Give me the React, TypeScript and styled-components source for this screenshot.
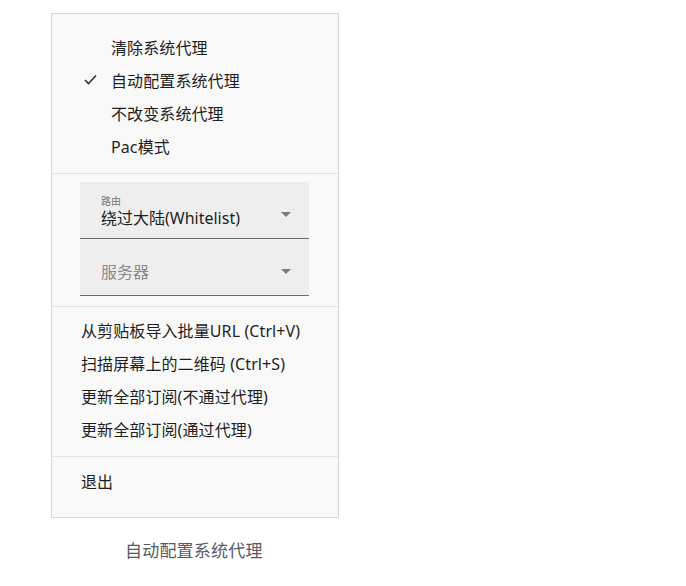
import React from "react";
import styled, { createGlobalStyle } from "styled-components";

const Global = createGlobalStyle`
  html, body { margin: 0; padding: 0; background: #ffffff; }
  body { font-family: "Noto Sans", "Noto Sans CJK SC", sans-serif; }
`;

const Page = styled.div`
  width: 686px;
  height: 586px;
  display: flex;
  flex-direction: column;
  padding: 13px 0 0 51px;
  box-sizing: border-box;
`;

const Menu = styled.div`
  width: 288px;
  height: 505px;
  box-sizing: border-box;
  background: #f9f9f9;
  border: 1px solid #d6d6d6;
  display: flex;
  flex-direction: column;
`;

const Section = styled.div<{ $pt: number; $pb: number; $last?: boolean }>`
  padding: ${(p) => p.$pt}px 0 ${(p) => p.$pb}px;
  border-bottom: ${(p) => (p.$last ? "none" : "1px solid #e4e4e4")};
  display: flex;
  flex-direction: column;
`;

const Item = styled.div<{ $indent: number }>`
  height: 33px;
  display: flex;
  align-items: center;
  padding-left: ${(p) => p.$indent}px;
  position: relative;
  font-size: 16px;
  color: #1e1e1e;
  white-space: nowrap;
  letter-spacing: 0.1px;
`;

const Check = styled.svg`
  position: absolute;
  left: 32px;
  top: 11px;
`;

const Select = styled.div`
  margin: 0 29px 0 28px;
  height: 56px;
  background: #eeeeee;
  border-bottom: 1px solid #6e6e6e;
  display: flex;
  align-items: center;
  padding: 0 18px 0 21px;
`;

const SelectBody = styled.div`
  flex: 1;
  display: flex;
  flex-direction: column;
  justify-content: center;
  padding-top: 5px;
`;

const SelectLabel = styled.div`
  font-size: 10px;
  line-height: 12px;
  color: #777;
`;

const SelectValue = styled.div<{ $placeholder?: boolean }>`
  font-size: 16px;
  line-height: 23px;
  color: ${(p) => (p.$placeholder ? "#8a8a8a" : "#1e1e1e")};
  margin-top: ${(p) => (p.$placeholder ? 6 : 0)}px;
  white-space: nowrap;
`;

const Arrow = styled.div`
  width: 0;
  height: 0;
  margin-top: 8px;
  border-left: 5px solid transparent;
  border-right: 5px solid transparent;
  border-top: 5px solid #7a7a7a;
`;

const Caption = styled.div`
  margin: 19px 0 0 74px;
  font-size: 17px;
  color: #555a66;
  letter-spacing: 0.2px;
`;

export default function App() {
  return (
    <>
      <Global />
      <Page>
        <Menu>
          <Section $pt={16} $pb={11}>
            <Item $indent={59}>清除系统代理</Item>
            <Item $indent={59}>
              <Check width="13" height="11" viewBox="0 0 13 11">
                <path d="M1 6 L4.5 9.5 L12 1.5" fill="none" stroke="#333" strokeWidth="1.6" />
              </Check>
              自动配置系统代理
            </Item>
            <Item $indent={59}>不改变系统代理</Item>
            <Item $indent={59}>Pac模式</Item>
          </Section>
          <Section $pt={8} $pb={10}>
            <Select>
              <SelectBody>
                <SelectLabel>路由</SelectLabel>
                <SelectValue>绕过大陆(Whitelist)</SelectValue>
              </SelectBody>
              <Arrow />
            </Select>
            <Select>
              <SelectBody>
                <SelectValue $placeholder>服务器</SelectValue>
              </SelectBody>
              <Arrow />
            </Select>
          </Section>
          <Section $pt={6} $pb={11}>
            <Item $indent={29}>从剪贴板导入批量URL (Ctrl+V)</Item>
            <Item $indent={29}>扫描屏幕上的二维码 (Ctrl+S)</Item>
            <Item $indent={29}>更新全部订阅(不通过代理)</Item>
            <Item $indent={29}>更新全部订阅(通过代理)</Item>
          </Section>
          <Section $pt={7} $pb={0} $last>
            <Item $indent={29}>退出</Item>
          </Section>
        </Menu>
        <Caption>自动配置系统代理</Caption>
      </Page>
    </>
  );
}
